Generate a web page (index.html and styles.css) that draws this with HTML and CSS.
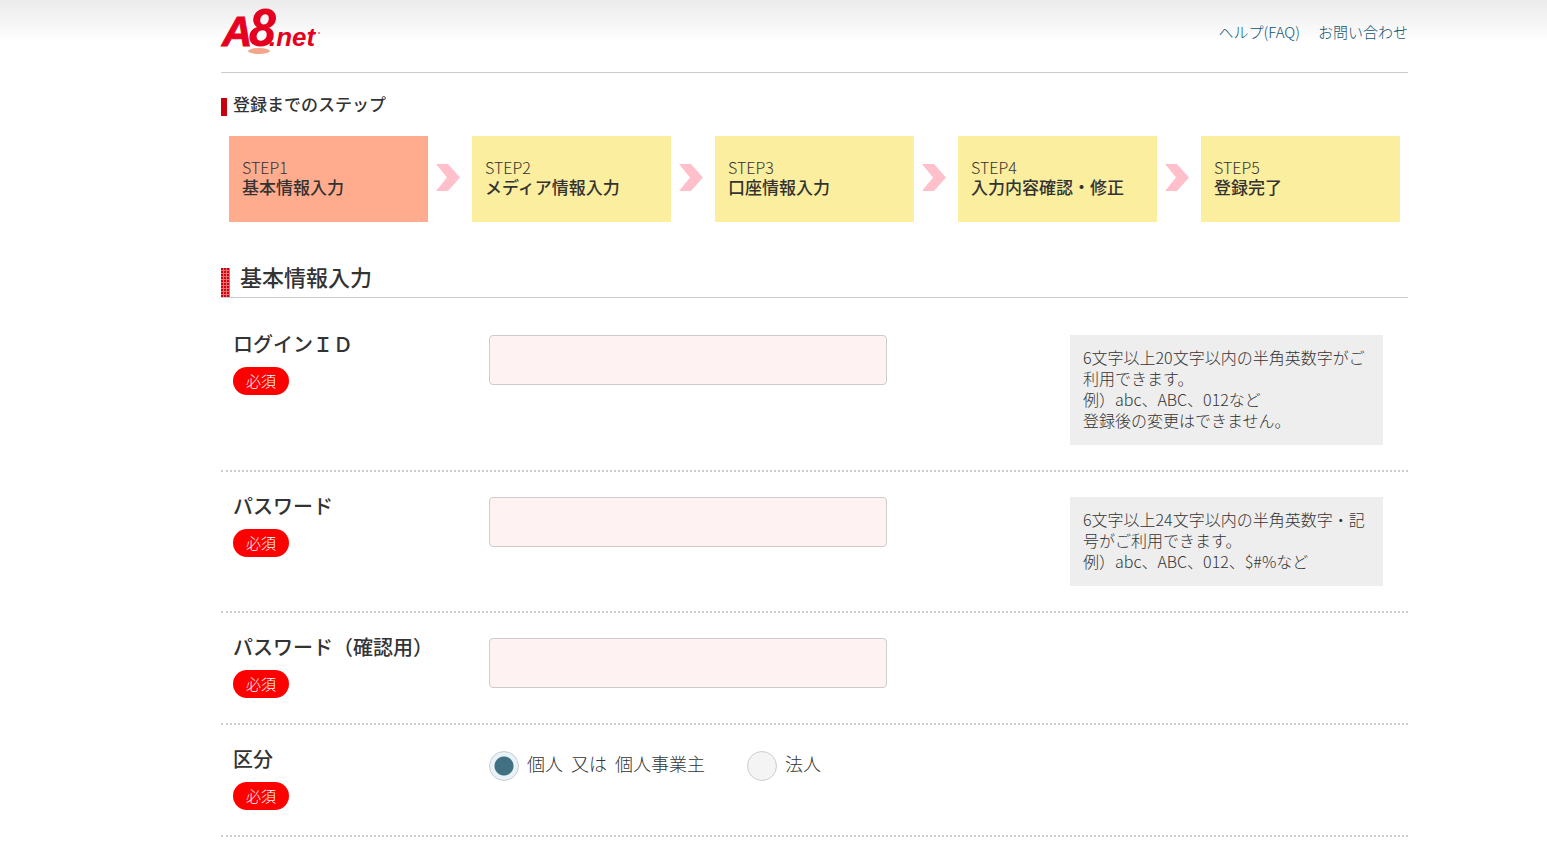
FILE: index.html
```html
<!DOCTYPE html>
<html lang="ja">
<head>
<meta charset="utf-8">
<title>A8.net 基本情報入力</title>
<link rel="stylesheet" href="styles.css">
</head>
<body>
<div class="page">
  <header class="header">
    <a class="logo" href="#" aria-label="A8.net">
      <svg width="102" height="50" viewBox="0 0 102 50" aria-hidden="true">
        <ellipse cx="38" cy="43" rx="11" ry="3" fill="#f4a58e"/>
        <g class="logo-text">
          <text x="1" y="38" font-size="42" stroke-width="1">A</text>
          <text class="logo-eight" x="27" y="38" font-size="52">8</text>
          <text x="48" y="38" font-size="26">.net</text>
        </g>
        <circle cx="98" cy="25" r="1" fill="#e66"/>
      </svg>
    </a>
    <nav class="links">
      <a href="#">ヘルプ(FAQ)</a>
      <a href="#">お問い合わせ</a>
    </nav>
  </header>

  <main>
    <h2 class="steps-title">登録までのステップ</h2>
    <ol class="steps">
      <li class="step current"><span class="step-no">STEP1</span><strong>基本情報入力</strong></li>
      <li class="arrow" aria-hidden="true"><svg width="24" height="27" viewBox="0 0 24 27"><path d="M0 0H12L24 13.500L12 27H0L11 13.500Z"/></svg></li>
      <li class="step"><span class="step-no">STEP2</span><strong>メディア情報入力</strong></li>
      <li class="arrow" aria-hidden="true"><svg width="24" height="27" viewBox="0 0 24 27"><path d="M0 0H12L24 13.500L12 27H0L11 13.500Z"/></svg></li>
      <li class="step"><span class="step-no">STEP3</span><strong>口座情報入力</strong></li>
      <li class="arrow" aria-hidden="true"><svg width="24" height="27" viewBox="0 0 24 27"><path d="M0 0H12L24 13.500L12 27H0L11 13.500Z"/></svg></li>
      <li class="step"><span class="step-no">STEP4</span><strong>入力内容確認・修正</strong></li>
      <li class="arrow" aria-hidden="true"><svg width="24" height="27" viewBox="0 0 24 27"><path d="M0 0H12L24 13.500L12 27H0L11 13.500Z"/></svg></li>
      <li class="step"><span class="step-no">STEP5</span><strong>登録完了</strong></li>
    </ol>

    <h1 class="form-title">基本情報入力</h1>
    <form>
      <div class="row">
        <div class="head">
          <label class="name" for="login">ログインＩＤ</label>
          <span class="required">必須</span>
        </div>
        <input class="field" id="login" type="text">
        <p class="note">6文字以上20文字以内の半角英数字がご利用できます。<br>例）abc、ABC、012など<br>登録後の変更はできません。</p>
      </div>
      <div class="row">
        <div class="head">
          <label class="name" for="pass">パスワード</label>
          <span class="required">必須</span>
        </div>
        <input class="field" id="pass" type="password">
        <p class="note">6文字以上24文字以内の半角英数字・記号がご利用できます。<br>例）abc、ABC、012、$#%など</p>
      </div>
      <div class="row">
        <div class="head">
          <label class="name" for="pass2">パスワード（確認用）</label>
          <span class="required">必須</span>
        </div>
        <input class="field" id="pass2" type="password">
      </div>
      <div class="row" role="radiogroup" aria-labelledby="kind">
        <div class="head">
          <span class="name" id="kind">区分</span>
          <span class="required">必須</span>
        </div>
        <div class="choices">
          <label class="choice"><input type="radio" name="kind" checked>個人&nbsp; 又は&nbsp; 個人事業主</label>
          <label class="choice"><input type="radio" name="kind">法人</label>
        </div>
      </div>
    </form>
  </main>
</div>
</body>
</html>
```
FILE: styles.css
```css
* {
  box-sizing: border-box;
}

body {
  margin: 0;
  background: #fff linear-gradient(#ebebeb, #fff) repeat-x 0 0 / 100% 42px;
  color: #333;
  font-family: "Noto Sans CJK JP", sans-serif;
  font-size: 16px;
  font-weight: 300;
}

.page {
  padding: 0 139px 0 221px;
}

.header {
  display: flex;
  justify-content: space-between;
  align-items: flex-start;
  height: 73px;
  padding-top: 8px;
  border-bottom: 1px solid #ccc;
}

.logo svg {
  display: block;
  overflow: visible;
}

.logo-text {
  fill: #e50020;
  stroke: #e50020;
  stroke-width: 0;
  font-family: "Liberation Sans", sans-serif;
  font-style: italic;
  font-weight: 700;
}

.logo-eight {
  font-family: Roboto, sans-serif;
}

.links {
  display: flex;
  gap: 18px;
  padding-top: 14px;
  font-size: 15px;
  line-height: 20px;
}

.links a {
  color: #0f5573;
  text-decoration: none;
}

.steps-title {
  display: flex;
  align-items: flex-start;
  gap: 6px;
  margin: 21px 0 0;
  font-size: 17px;
  font-weight: 500;
  line-height: 20px;
}

.steps-title::before {
  content: "";
  width: 6px;
  height: 18px;
  margin-top: 4px;
  background: #c7000b;
}

.steps {
  display: flex;
  align-items: center;
  gap: 8px;
  margin: 20px 0 0;
  padding: 0 8px;
  list-style: none;
}

.step {
  flex: 1 1 0;
  padding: 21px 13px 25px;
  background: #fbee9e;
  line-height: 20px;
}

.step.current {
  background: #ffab8d;
}

.step-no,
.step strong {
  display: block;
}

.step strong {
  font-size: 17px;
  font-weight: 500;
  white-space: nowrap;
}

.arrow {
  flex: none;
  width: 28px;
  padding-bottom: 4px;
}

.arrow svg {
  display: block;
  fill: #ffc0cb;
}

.form-title {
  display: flex;
  align-items: flex-end;
  gap: 10px;
  margin: 33px 0 12px;
  border-bottom: 1px solid #ccc;
  font-size: 22px;
  font-weight: 500;
  line-height: 42px;
}

.form-title::before {
  content: "";
  width: 9px;
  height: 29px;
  background:
    repeating-linear-gradient(90deg, transparent 0 2px, #e87070 2px 3px),
    repeating-linear-gradient(#d00010 0 2px, #e87070 2px 3px);
}

.row {
  display: grid;
  grid-template-columns: 256px 1fr 313px;
  align-items: start;
  padding: 25px 25px 25px 12px;
  border-bottom: 2px dotted #ccc;
}

.head {
  display: flex;
  flex-direction: column;
  align-items: flex-start;
  gap: 14px;
}

.name {
  font-size: 20px;
  font-weight: 500;
  line-height: 18px;
}

.required {
  padding: 0 13px 1px;
  border-radius: 14px;
  background: #f00;
  color: #fff;
  font-size: 15px;
  line-height: 27px;
}

.field {
  width: 100%;
  max-width: 398px;
  height: 50px;
  padding: 0 12px;
  border: 1px solid #ccc;
  border-radius: 4px;
  background: #fff2f2;
  font: inherit;
}

.note {
  margin: 0;
  padding: 12px 13px 14px;
  background: #eee;
  line-height: 21px;
}

.choices {
  display: flex;
  gap: 42px;
  font-size: 18px;
  line-height: 26px;
}

.choice {
  display: flex;
  gap: 8px;
  white-space: nowrap;
}

.choice input {
  appearance: none;
  width: 30px;
  height: 30px;
  margin: 1px 0 0;
  border: 1px solid #ccc;
  border-radius: 50%;
  background: #f4f4f4;
}

.choice input:checked {
  background: radial-gradient(circle, #427083 0 9px, #e8f2f9 10px);
}
```
